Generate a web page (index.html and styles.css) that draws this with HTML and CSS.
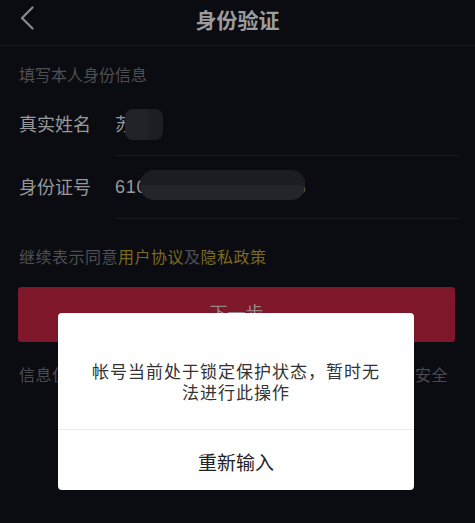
FILE: index.html
```html
<!DOCTYPE html>
<html lang="zh-CN">
<head>
<meta charset="utf-8">
<title>身份验证</title>
<link rel="stylesheet" href="styles.css">
</head>
<body class="page">
  <header class="nav">
    <svg class="back" width="14" height="24" viewBox="0 0 14 24"><path d="M12.5 1.5 L2 12 L12.5 22.5" fill="none" stroke="#8b8b8e" stroke-width="2.2" stroke-linecap="round" stroke-linejoin="round"/></svg>
    <h1 class="title">身份验证</h1>
  </header>
  <p class="hint">填写本人身份信息</p>
  <div class="form">
    <div class="row">
      <span class="label">真实姓名</span>
      <div class="field"><span class="value">苏</span><span class="mask mask-name"></span></div>
    </div>
    <div class="row">
      <span class="label">身份证号</span>
      <div class="field"><span class="value digits">610123199001011235</span><span class="mask mask-id"></span></div>
    </div>
  </div>
  <p class="agree">继续表示同意<span class="link">用户协议</span>及<span class="link">隐私政策</span></p>
  <button class="next">下一步</button>
  <p class="info">信息仅用于身份验证，抖音将严格保密并保障你的信息安全</p>

  <div class="dialog">
    <p class="dialog-msg">帐号当前处于锁定保护状态，暂时无法进行此操作</p>
    <div class="dialog-action">重新输入</div>
  </div>
</body>
</html>
```

FILE: styles.css
```css
* { box-sizing: border-box; }
html, body { margin: 0; padding: 0; }
.page {
  width: 475px;
  height: 523px;
  background: #0b0c11;
  font-family: "Noto Sans CJK SC", "Noto Sans", sans-serif;
  position: relative;
  overflow: hidden;
}
.nav {
  height: 46px;
  border-bottom: 1px solid #17181d;
  display: flex;
  align-items: center;
  justify-content: center;
  position: relative;
}
.back {
  position: absolute;
  left: 20px;
  top: 6px;
}
.title {
  margin: 0;
  font-size: 21px;
  font-weight: 700;
  color: #9c9c9f;
  line-height: 28px;
  margin-top: -8px;
}
.hint {
  margin: 17px 0 0 19px;
  font-size: 16px;
  line-height: 22px;
  color: #4f4f53;
}
.form {
  margin-top: 8px;
}
.row {
  display: flex;
  height: 63px;
}
.label {
  width: 96px;
  padding-left: 19px;
  padding-top: 18px;
  font-size: 18px;
  line-height: 24px;
  color: #98989b;
  flex: none;
  box-sizing: content-box;
  width: 77px;
}
.field {
  flex: 1;
  margin-left: 19px;
  margin-right: 16px;
  border-bottom: 1px solid #191a1f;
  padding-top: 18px;
  position: relative;
}
.value {
  font-size: 18px;
  line-height: 24px;
  color: #98989b;
}
.digits {
  font-family: "Liberation Sans", Arial, sans-serif;
  letter-spacing: 0.7px;
}
.mask {
  position: absolute;
  border-radius: 8px;
  background: linear-gradient(#1c1d22 0 50%, #24252a 50% 100%);
}
.mask-name {
  left: 10px;
  top: 16px;
  width: 38px;
  height: 31px;
  background: linear-gradient(90deg, #222328 0 60%, #1d1e23 60% 100%);
}
.mask-id {
  left: 25px;
  top: 14px;
  width: 165px;
  height: 30px;
  border-radius: 14px;
}
.agree {
  margin: 26px 0 0 19px;
  font-size: 16px;
  line-height: 22px;
  letter-spacing: 0.5px;
  color: #4f4f53;
}
.link { color: #7a6a20; }
.next {
  display: block;
  margin: 20px 20px 0 18px;
  width: 437px;
  height: 55px;
  border: none;
  border-radius: 3px;
  background: #7e1729;
  color: #9a8489;
  font-family: inherit;
  font-size: 18px;
  line-height: 24px;
  padding: 0 0 6px;
}
.info {
  margin: 21px 0 0 19px;
  font-size: 16px;
  line-height: 22px;
  letter-spacing: 0.5px;
  color: #4a4a4e;
  white-space: nowrap;
}
.dialog {
  position: absolute;
  left: 58px;
  top: 313px;
  width: 356px;
  height: 177px;
  background: #ffffff;
  border-radius: 4px;
  display: flex;
  flex-direction: column;
}
.dialog-msg {
  margin: 0;
  height: 117px;
  padding: 47px 30px 0;
  font-size: 17px;
  letter-spacing: 1px;
  line-height: 21px;
  color: #333333;
  text-align: center;
  border-bottom: 1px solid #ececec;
}
.dialog-action {
  flex: 1;
  display: flex;
  align-items: center;
  justify-content: center;
  font-size: 19px;
  color: #222222;
  padding-top: 3px;
}
```
